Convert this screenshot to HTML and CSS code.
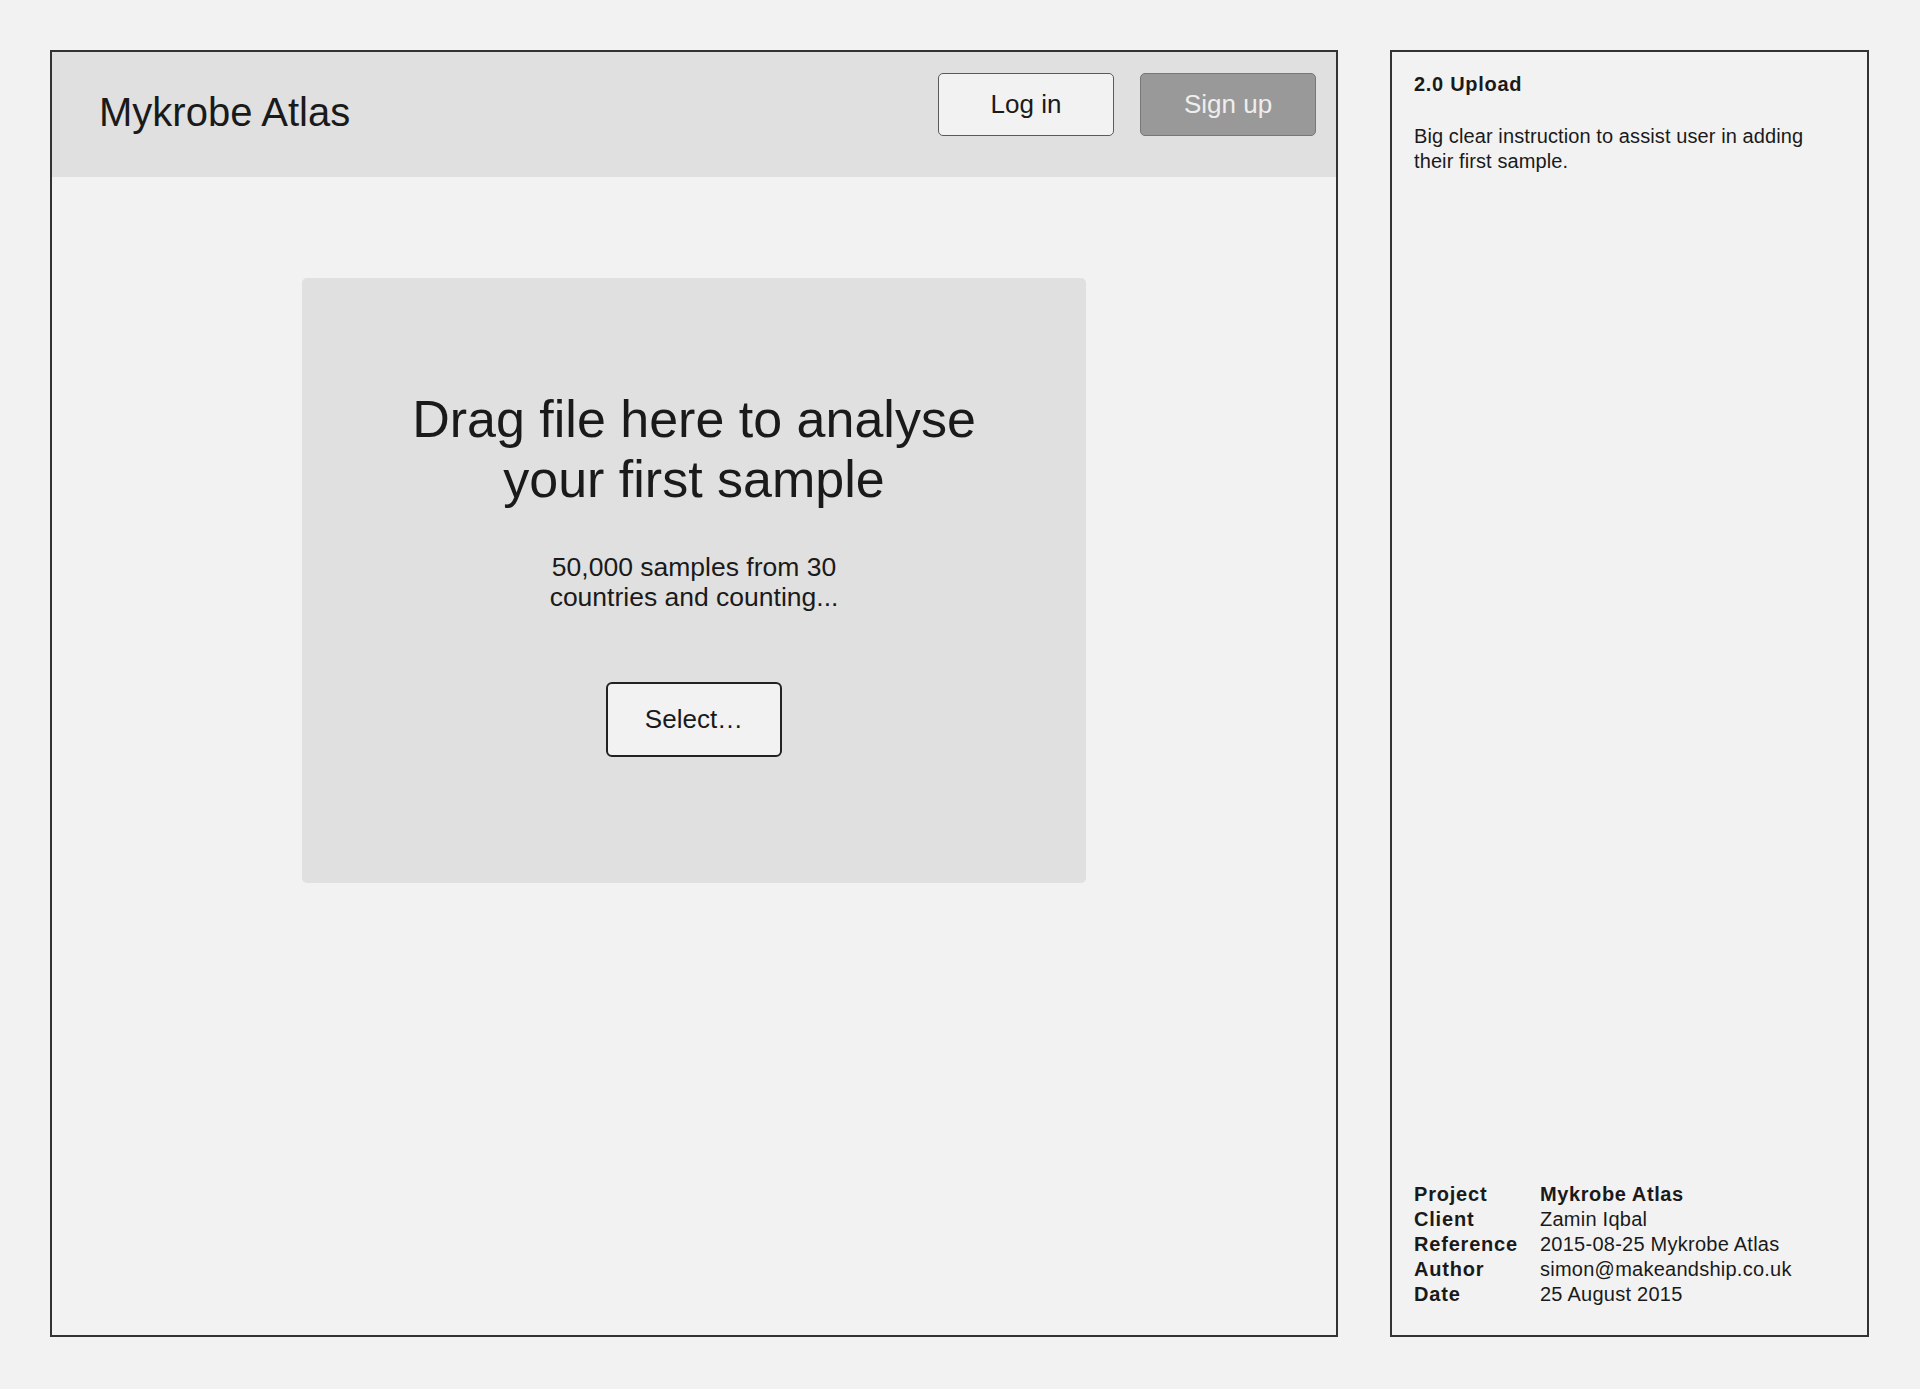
FILE: index.html
```html
<!DOCTYPE html>
<html lang="en">
<head>
    <meta charset="UTF-8">
    <meta name="viewport" content="width=device-width, initial-scale=1.0">
    <title>2.0 Upload - Mykrobe Atlas</title>
    <link rel="stylesheet" href="styles.css">
</head>
<body>
    <div class="sheet">
        <div class="screen">
            <header class="header">
                <div class="logo">Mykrobe Atlas</div>
                <nav class="nav">
                    <button type="button" class="login-button">Log in</button>
                    <button type="button" class="signup-button">Sign up</button>
                </nav>
            </header>

            <div class="drop-zone">
                <h1>Drag file here to analyse<br>your first sample</h1>
                <p class="drop-stats">50,000 samples from 30<br>countries and counting...</p>
                <button type="button" class="select-button">Select…</button>
            </div>
        </div>

        <aside class="notes">
            <div class="notes-top">
                <h2>2.0 Upload</h2>
                <p>Big clear instruction to assist user in adding their first sample.</p>
            </div>

            <dl class="meta">
                <dt>Project</dt>
                <dd class="meta-strong">Mykrobe Atlas</dd>
                <dt>Client</dt>
                <dd>Zamin Iqbal</dd>
                <dt>Reference</dt>
                <dd>2015-08-25 Mykrobe Atlas</dd>
                <dt>Author</dt>
                <dd>simon@makeandship.co.uk</dd>
                <dt>Date</dt>
                <dd>25 August 2015</dd>
            </dl>
        </aside>
    </div>
</body>
</html>
```

FILE: styles.css
```css
body {
    font-family: 'Liberation Sans', Arial, sans-serif;
    background-color: #f2f2f2;
    color: #1a1a1a;
    margin: 0;
    padding: 50px 0 0 50px;
    min-height: 100vh;
    box-sizing: border-box;
}

.sheet {
    display: flex;
    gap: 52px;
    height: 1287px;
}

.screen {
    width: 1288px;
    box-sizing: border-box;
    border: 2px solid #333;
    background-color: #f2f2f2;
    display: flex;
    flex-direction: column;
    align-items: center;
}

.header {
    align-self: stretch;
    height: 125px;
    background-color: #e0e0e0;
    display: flex;
    align-items: center;
    justify-content: space-between;
    padding: 0 20px 0 47px;
}

.logo {
    font-size: 40px;
    line-height: 40px;
    margin-top: -5px;
}

.nav {
    align-self: flex-start;
    margin-top: 21px;
    display: flex;
    gap: 26px;
}

button {
    font-family: inherit;
    font-size: 26px;
    cursor: pointer;
}

.login-button,
.signup-button {
    width: 176px;
    height: 63px;
    border-radius: 5px;
    padding: 0;
}

.login-button {
    background-color: #f2f2f2;
    border: 1.5px solid #5a5a5a;
    color: #1a1a1a;
}

.signup-button {
    background-color: #999;
    border: 1.5px solid #777;
    color: #eee;
}

.drop-zone {
    width: 784px;
    height: 605px;
    margin-top: 101px;
    box-sizing: border-box;
    padding-top: 111px;
    background-color: #e0e0e0;
    border-radius: 5px;
    display: flex;
    flex-direction: column;
    align-items: center;
    text-align: center;
}

h1 {
    font-size: 52px;
    font-weight: normal;
    line-height: 60px;
    margin: 0;
}

.drop-stats {
    font-size: 26.5px;
    line-height: 30px;
    margin: 43px 0 0;
}

.select-button {
    width: 176px;
    height: 75px;
    margin-top: 70px;
    background-color: #f2f2f2;
    border: 2px solid #222;
    border-radius: 6px;
    color: #1a1a1a;
    padding: 0;
}

.notes {
    width: 479px;
    box-sizing: border-box;
    border: 2px solid #333;
    padding: 20px 40px 28px 22px;
    display: flex;
    flex-direction: column;
    justify-content: space-between;
    font-size: 20px;
    line-height: 25px;
}

h2 {
    font-size: 20px;
    line-height: 25px;
    letter-spacing: 0.7px;
    margin: 0;
}

.notes-top p {
    margin: 27px 0 0;
    letter-spacing: 0.1px;
}

.meta {
    display: grid;
    grid-template-columns: 126px 1fr;
    margin: 0;
}

.meta dt {
    font-weight: bold;
    letter-spacing: 0.8px;
}

.meta dd {
    margin: 0;
    letter-spacing: 0.25px;
}

.meta .meta-strong {
    font-weight: bold;
    letter-spacing: 0.6px;
}
```
